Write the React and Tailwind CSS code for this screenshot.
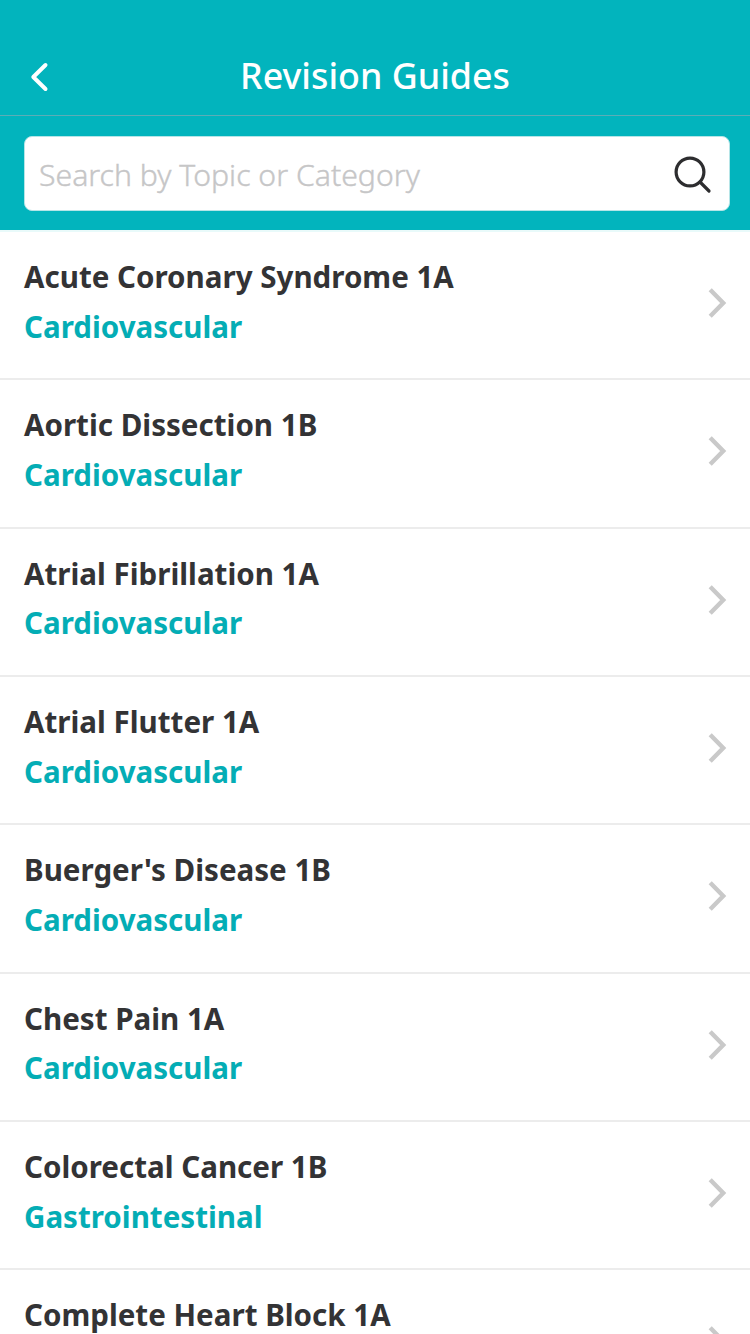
const guides = [
  ["Acute Coronary Syndrome 1A", "Cardiovascular"],
  ["Aortic Dissection 1B", "Cardiovascular"],
  ["Atrial Fibrillation 1A", "Cardiovascular"],
  ["Atrial Flutter 1A", "Cardiovascular"],
  ["Buerger's Disease 1B", "Cardiovascular"],
  ["Chest Pain 1A", "Cardiovascular"],
  ["Colorectal Cancer 1B", "Gastrointestinal"],
  ["Complete Heart Block 1A", "Cardiovascular"],
];

function GuideRow({ title, category }) {
  return (
    <li className="flex h-[148.35px] shrink-0 items-start justify-between border-b-2 border-[#ececec] pl-6 pr-[22px]">
      <div className="pt-[25px] text-[29.55px] leading-[40px] font-bold whitespace-nowrap">
        <h2 className="text-[#333335]">{title}</h2>
        <p className="mt-[9.5px] text-[#04adb5]">{category}</p>
      </div>
      <svg className="mt-[55px] h-8 w-5" viewBox="0 0 20 32" fill="none" stroke="#c9c9c9" strokeWidth="4.4">
        <path d="M2.2 2.8 L15.2 16 L2.2 29.2" />
      </svg>
    </li>
  );
}

export default function App() {
  return (
    <div className="flex h-[1334px] w-[750px] flex-col overflow-hidden bg-white font-['Noto_Sans',sans-serif]">
      <header className="shrink-0 bg-[#02b4bd]">
        <div className="grid h-[116px] grid-cols-[100px_1fr_100px] items-start border-b border-[#5cadb6] pt-[50px]">
          <button className="mt-px flex h-[52px] items-center pl-[30px]" aria-label="Back">
            <svg className="h-8 w-5" viewBox="0 0 20 32" fill="none" stroke="white" strokeWidth="4" strokeLinecap="round" strokeLinejoin="round">
              <path d="M15.5 4 L3.3 16 L15.5 28" />
            </svg>
          </button>
          <h1 className="text-center text-[35.8px] leading-[50px] font-medium text-white">Revision Guides</h1>
        </div>
        <div className="h-[114px] pt-5 pr-5 pl-6">
          <div className="flex h-[75px] items-center justify-between rounded-lg border border-[#b5e5e7] bg-white pr-[17px] pl-[14px]">
            <span className="pt-[2px] text-[30.2px] leading-[40px] font-light text-[#c6c6c7] [-webkit-text-stroke:0.4px_#c6c6c7]">Search by Topic or Category</span>
            <svg className="h-10 w-10" viewBox="0 0 40 40" fill="none" stroke="#2d2d2f" strokeWidth="3.2" strokeLinecap="round">
              <circle cx="18" cy="18" r="13.9" />
              <path d="M28 28 L37 37" />
            </svg>
          </div>
        </div>
      </header>
      <ul className="flex flex-col border-t-2 border-[#e9fafa]">
        {guides.map(([title, category]) => (
          <GuideRow key={title} title={title} category={category} />
        ))}
      </ul>
    </div>
  );
}
